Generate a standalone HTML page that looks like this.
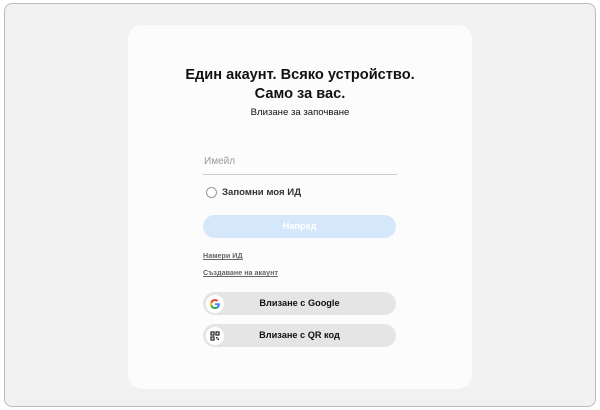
<!DOCTYPE html><html><head><meta charset="utf-8"><style>
*{margin:0;padding:0;box-sizing:border-box}
body{width:600px;height:410px;background:#fff;font-family:"Liberation Sans",sans-serif;position:relative;overflow:hidden}
.frame{position:absolute;left:4px;top:3px;width:592px;height:404px;background:#f1f1f1;border:1px solid #bbb;border-radius:8px}
.card{position:absolute;left:128px;top:25px;width:344px;height:364px;background:#fcfcfc;border-radius:14px}
.t{position:absolute;left:0;width:600px;text-align:center;color:#111}
.btn{position:absolute;left:203px;width:193px;height:23px;border-radius:12px;background:#e5e5e5;font-size:9.2px;font-weight:bold;color:#111;text-align:center;line-height:23px}
.ic{position:absolute;left:3px;top:2.5px;width:18px;height:18px;border-radius:50%;background:#fff}
.lk{position:absolute;left:203px;font-size:7.2px;font-weight:bold;color:#666;text-decoration:underline}
</style></head><body>
<div class="frame"></div><div class="card"></div>
<div class="t" style="top:66px;font-size:14.6px;font-weight:bold;line-height:19px">Един акаунт. Всяко устройство.<br>Само за вас.</div>
<div class="t" style="top:107px;font-size:9.6px">Влизане за започване</div>
<div style="position:absolute;left:204px;top:156px;font-size:10px;color:#999">Имейл</div>
<div style="position:absolute;left:203px;top:174px;width:194px;height:1px;background:#ccc"></div>
<div style="position:absolute;left:206px;top:187px;width:11px;height:11px;border:1px solid #999;border-radius:50%;background:#fff"></div>
<div style="position:absolute;left:222px;top:187px;font-size:9.6px;font-weight:bold;color:#333">Запомни моя ИД</div>
<div class="btn" style="top:215px;background:#d5e8fb;color:#fff">Напред</div>
<div class="lk" style="top:251px">Намери ИД</div>
<div class="lk" style="top:268px">Създаване на акаунт</div>
<div class="btn" style="top:292px"><div class="ic"><svg width="18" height="18" viewBox="0 0 18 18"><g transform="translate(4,4) scale(0.42)"><path d="M23.5 12.3c0-.8-.1-1.6-.2-2.3H12v4.5h6.5a5.6 5.6 0 0 1-2.4 3.6v3h3.9c2.3-2.1 3.5-5.2 3.5-8.8z" fill="#4285F4"/><path d="M12 24c3.2 0 6-1.1 8-2.9l-3.9-3c-1.1.7-2.5 1.2-4.1 1.2-3.1 0-5.8-2.1-6.7-5H1.3v3.1A12 12 0 0 0 12 24z" fill="#34A853"/><path d="M5.3 14.3a7.2 7.2 0 0 1 0-4.6V6.6H1.3a12 12 0 0 0 0 10.8z" fill="#FBBC05"/><path d="M12 4.8c1.8 0 3.3.6 4.6 1.8l3.4-3.4A12 12 0 0 0 1.3 6.6l4 3.1c.9-2.8 3.6-4.9 6.7-4.9z" fill="#EA4335"/></g></svg></div>Влизане с Google</div>
<div class="btn" style="top:324px"><div class="ic"><svg width="18" height="18" viewBox="0 0 18 18"><g fill="none" stroke="#222" stroke-width="1.2"><rect x="5" y="5" width="3" height="3"/><rect x="10" y="5" width="3" height="3"/><rect x="5" y="10" width="3" height="3"/></g><rect x="10" y="10" width="1.5" height="1.5" fill="#222"/><rect x="11.5" y="11.5" width="1.5" height="1.5" fill="#222"/></svg></div>Влизане с QR код</div>
</body></html>
